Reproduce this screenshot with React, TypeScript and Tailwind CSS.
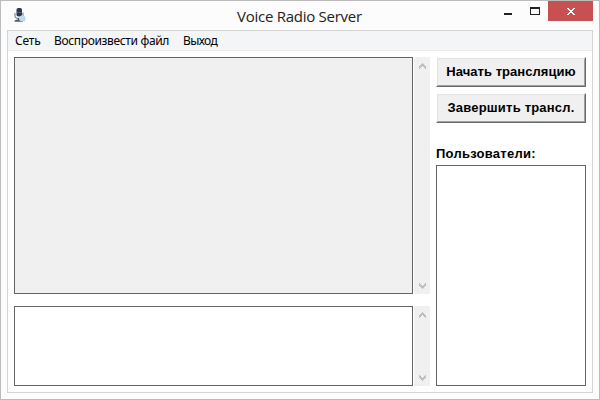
import React from "react";

function MicIcon() {
  return (
    <svg width="14" height="16" viewBox="0 0 14 16" className="block">
      <path d="M2 6v3c0 1.500 1.500 2.500 4 2.500s4-1 4-2.500V5.500" fill="none" stroke="#7f8a9c" strokeWidth="1.200" />
      <rect x="3.500" y="1" width="5.500" height="8.500" rx="1.800" fill="#30364a" />
      <path d="M3.500 5.500h5" stroke="#6c7489" strokeWidth="0.700" />
      <path d="M5 11h2.500v2H5z" fill="#3f4960" />
      <path d="M1.500 14c.5-2 8-2 8.500 0v.8H1.500z" fill="#4e5a6e" />
      <ellipse cx="9.300" cy="11.500" rx="3.300" ry="2.900" fill="#bfdaea" />
      <path d="M9.500 13l2.500 1.800-.2-2.500z" fill="#bfdaea" />
    </svg>
  );
}

function Chevron({ down = false }: { down?: boolean }) {
  return (
    <svg width="7" height="6" viewBox="0 0 7 6" className={down ? "block rotate-180" : "block"} shapeRendering="crispEdges">
      <path d="M3 0h1v1h1v1h1v1h1v3H6V5H5V4H4V3H3v1H2v1H1v1H0V3h1V2h1V1h1z" fill="#bfbfbf" />
    </svg>
  );
}

function ScrollBar() {
  return (
    <div className="ml-px flex w-4 flex-col items-center justify-between bg-[#f0f0f0] pt-1.5 pb-[5px]">
      <Chevron />
      <Chevron down />
    </div>
  );
}

function PushButton({ children }: { children: React.ReactNode }) {
  return (
    <button className="flex h-[30px] w-[150px] items-center justify-center border border-t-white border-l-white border-r-[#696969] border-b-[#696969] bg-[#f0f0f0] font-['Liberation_Sans',sans-serif] text-[13px] font-bold whitespace-nowrap text-black">
      <span className="flex h-full w-full items-center justify-center border border-t-[#e3e3e3] border-l-[#e3e3e3] border-r-[#a0a0a0] border-b-[#a0a0a0]">
        {children}
      </span>
    </button>
  );
}

export default function App() {
  return (
    <div className="flex h-[400px] w-[600px] flex-col border border-[#bcbcbc] bg-[#fcfcfc] px-1.5 pb-1.5 font-['Noto_Sans',sans-serif] text-black">
      <header className="flex h-[29px] shrink-0 items-start">
        <div className="w-[230px] pt-[6px] pl-[6px]">
          <MicIcon />
        </div>
        <h1 className="w-[230px] pt-1 font-['Open_Sans',sans-serif] text-[15px] leading-[22px] tracking-[-0.26px] whitespace-nowrap text-[#222]">
          Voice Radio Server
        </h1>
        <div className="ml-auto flex h-5">
          <div className="flex w-7 justify-center pt-3">
            <div className="h-0.5 w-2 bg-[#222]" />
          </div>
          <div className="flex w-[26px] justify-center pt-1.5">
            <div className="h-2 w-2.5 border border-t-2 border-[#222]" />
          </div>
          <div className="flex h-5 w-[45px] items-center justify-center bg-[#c75050]">
            <svg width="8" height="7" viewBox="0 0 8 7" shapeRendering="crispEdges">
              <path d="M0 0h2v1h1v1h2V1h1V0h2v1H7v1H6v1H5v1h1v1h1v1h1v1H6V6H5V5H3v1H2v1H0V6h1V5h1V4h1V3H2V2H1V1H0z" fill="#fff" />
            </svg>
          </div>
        </div>
      </header>
      <main className="flex h-[363px] w-[586px] flex-col border border-[#d4d4d4] bg-white">
        <nav className="flex h-5 shrink-0 border-b border-[#ececec] bg-[#f4f5f7] pl-[7px] text-[12px] leading-5 whitespace-nowrap">
          <span className="w-[39px] tracking-[-0.2px]">Сеть</span>
          <span className="w-[129px] tracking-[-0.35px]">Воспроизвести файл</span>
          <span className="tracking-[-0.6px]">Выход</span>
        </nav>
        <div className="flex gap-1.5 pt-1.5 pl-1.5">
          <div className="flex flex-col gap-3">
            <div className="flex h-[237px]">
              <div className="w-[399px] border border-[#646464] bg-[#f0f0f0]" />
              <ScrollBar />
            </div>
            <div className="flex h-20">
              <div className="w-[399px] border border-[#646464] bg-white" />
              <ScrollBar />
            </div>
          </div>
          <aside className="flex flex-col">
            <PushButton><span className="tracking-[0.04px]">Начать трансляцию</span></PushButton>
            <div className="h-1.5" />
            <PushButton><span className="tracking-[0.2px]">Завершить трансл.</span></PushButton>
            <div className="mt-[23px] h-[19px] font-['Liberation_Sans',sans-serif] text-[13px] leading-4 font-bold tracking-[0.25px]">
              Пользователи:
            </div>
            <div className="h-[221px] w-[150px] border border-[#646464] bg-white" />
          </aside>
        </div>
      </main>
    </div>
  );
}
